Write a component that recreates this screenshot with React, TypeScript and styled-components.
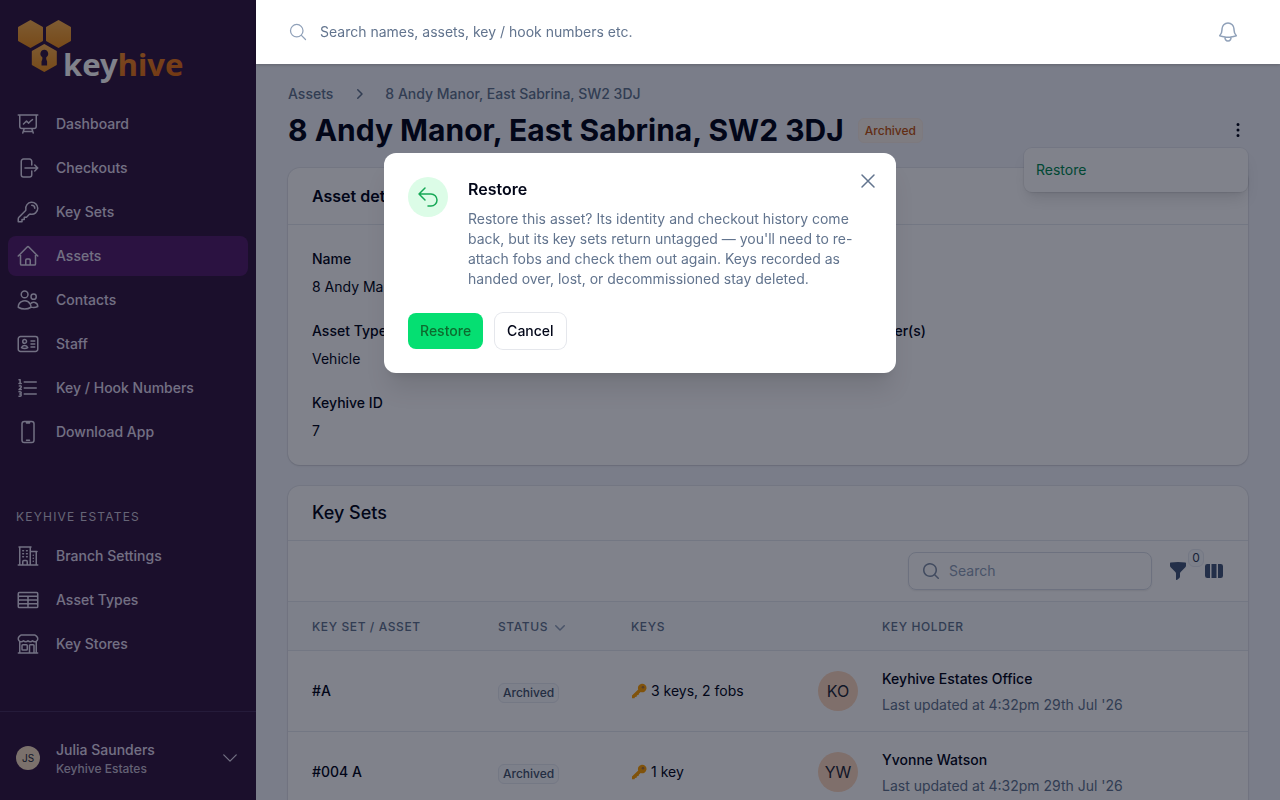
import React from "react";
import styled, { createGlobalStyle, css } from "styled-components";
import {
  HiOutlinePresentationChartLine,
  HiOutlineArrowRightOnRectangle,
  HiOutlineKey,
  HiOutlineHome,
  HiOutlineUsers,
  HiOutlineIdentification,
  HiOutlineNumberedList,
  HiOutlineDevicePhoneMobile,
  HiOutlineBuildingOffice2,
  HiOutlineTableCells,
  HiOutlineBuildingStorefront,
  HiOutlineChevronDown,
  HiOutlineMagnifyingGlass,
  HiOutlineBell,
  HiOutlineArrowUturnLeft,
  HiOutlineXMark,
  HiMiniChevronRight,
  HiMiniChevronDown,
  HiMiniEllipsisVertical,
  HiMiniFunnel,
  HiMiniViewColumns,
  HiMiniMagnifyingGlass,
} from "react-icons/hi2";

const GlobalStyle = createGlobalStyle`
  *, *::before, *::after { box-sizing: border-box; }
  html, body { margin: 0; }
  body {
    background: #f2f4fa;
    color: #020618;
    font-family: Inter, "Liberation Sans", sans-serif;
    font-size: 14px;
    line-height: 20px;
  }
  h1, h2, p, dl, dd, ul { margin: 0; padding: 0; }
  button, input { font: inherit; }
  a { color: inherit; text-decoration: none; }
`;

const Shell = styled.div`
  display: flex;
  height: 100vh;
`;

/* ---------- sidebar ---------- */

const Sidebar = styled.aside`
  display: flex;
  flex-direction: column;
  flex: 0 0 256px;
  background: #341840;
  color: #e2dbee;
`;

const Brand = styled.a`
  display: block;
  height: 104px;
  padding: 16px 16px 0;
`;

const NavGroup = styled.ul`
  display: flex;
  flex-direction: column;
  gap: 4px;
  padding: 0 8px;
  list-style: none;
`;

const NavLink = styled.a<{ $active?: boolean }>`
  display: flex;
  align-items: center;
  gap: 16px;
  height: 40px;
  padding: 0 8px;
  border-radius: 8px;
  font-weight: 500;
  background: ${(p) => (p.$active ? "#551f6a" : "transparent")};
  svg { width: 24px; height: 24px; }
`;

const NavHeading = styled.h2`
  margin-top: 55px;
  padding: 0 16px 9px;
  font-size: 12px;
  font-weight: 400;
  line-height: 20px;
  letter-spacing: 0.1em;
  text-transform: uppercase;
  color: #cbc5d6;
`;

const Account = styled.button`
  display: flex;
  align-items: center;
  gap: 16px;
  height: 89px;
  margin-top: auto;
  padding: 4px 16px 0;
  border: 0;
  border-top: 1px solid #48305c;
  background: none;
  color: inherit;
  text-align: left;
`;

const AccountText = styled.span`
  display: flex;
  flex-direction: column;
  flex: 1;
  padding-top: 2px;
`;

const AccountName = styled.span`
  font-weight: 500;
`;

const AccountOrg = styled.span`
  font-size: 12px;
  font-weight: 500;
  line-height: 18px;
  color: #c4bdd0;
`;

const Avatar = styled.span<{ $small?: boolean }>`
  display: inline-flex;
  align-items: center;
  justify-content: center;
  flex: none;
  width: ${(p) => (p.$small ? "24px" : "40px")};
  height: ${(p) => (p.$small ? "24px" : "40px")};
  border-radius: 50%;
  background: ${(p) => (p.$small ? "#f5dcc0" : "#fdd8be")};
  color: #1f2937;
  font-size: ${(p) => (p.$small ? "10px" : "16px")};
`;

/* ---------- main column ---------- */

const Column = styled.div`
  display: flex;
  flex-direction: column;
  flex: 1;
  min-width: 0;
`;

const TopBar = styled.header`
  position: relative;
  z-index: 20;
  display: flex;
  align-items: center;
  gap: 12px;
  flex: 0 0 64px;
  padding: 0 40px 0 32px;
  background: #fff;
  color: #90a1b9;
  box-shadow: 0 1px 3px rgba(0, 0, 0, 0.2);
`;

const GlobalSearch = styled.input`
  flex: 1;
  height: 40px;
  padding: 0 0 2px;
  border: 0;
  outline: 0;
  background: none;
  &::placeholder { color: #62748e; opacity: 1; }
`;

const IconButton = styled.button`
  display: inline-flex;
  padding: 0;
  border: 0;
  background: none;
  color: inherit;
`;

const Content = styled.main`
  flex: 1;
  padding: 20px 32px;
  overflow-y: auto;
  scrollbar-width: none;
`;

const Breadcrumbs = styled.nav`
  display: flex;
  align-items: center;
  gap: 16px;
  color: #62748e;
  font-weight: 500;
`;

const TitleRow = styled.div`
  display: flex;
  align-items: center;
  gap: 14px;
  margin: 8px 0 20px;
`;

const Title = styled.h1`
  font-size: 30px;
  line-height: 36px;
  font-weight: 700;
`;

const Badge = styled.span<{ $tone: "warning" | "gray" }>`
  display: inline-block;
  border-radius: 6px;
  font-size: 12px;
  font-weight: 500;
  ${(p) =>
    p.$tone === "warning"
      ? css`
          padding: 3px 6px 2px;
          line-height: 18px;
          background: #fbf3ea;
          border: 1px solid #f8ede4;
          color: #c2550f;
        `
      : css`
          margin-top: 5px;
          padding: 1px 4px;
          line-height: 16px;
          background: #f8fafc;
          border: 1px solid #e6eaf1;
          color: #45556c;
        `}
`;

const MenuAnchor = styled.div`
  position: relative;
  display: flex;
  margin-left: auto;
`;

const Menu = styled.div`
  position: absolute;
  top: 28px;
  right: 0;
  width: 224px;
  padding: 4px;
  border-radius: 8px;
  background: #fff;
  box-shadow: 0 0 0 1px rgba(2, 6, 24, 0.05), 0 10px 15px -3px rgba(0, 0, 0, 0.1),
    0 4px 6px -4px rgba(0, 0, 0, 0.1);
`;

const MenuItem = styled.button`
  width: 100%;
  padding: 8px;
  border: 0;
  border-radius: 6px;
  background: none;
  color: #008a50;
  text-align: left;
`;

const DotsButton = styled(IconButton)`
  padding: 0;
  color: #020618;
`;

const Card = styled.section`
  margin-bottom: 21px;
  border-radius: 12px;
  background: #fff;
  box-shadow: 0 0 0 1px rgba(2, 6, 24, 0.05), 0 1px 2px rgba(0, 0, 0, 0.1);
  overflow: hidden;
`;

const CardHeader = styled.header<{ $large?: boolean }>`
  padding: ${(p) => (p.$large ? "15px 24px" : "16px 24px")};
  border-bottom: 1px solid #e5e8ee;
  h2 {
    font-size: ${(p) => (p.$large ? "18px" : "16px")};
    font-weight: ${(p) => (p.$large ? 500 : 600)};
    line-height: 24px;
  }
`;

const Details = styled.dl`
  display: grid;
  grid-template-columns: 1fr 1fr;
  gap: 24px;
  padding: 24px;
  dt { margin-bottom: 8px; font-weight: 500; }
`;

const Wide = styled.div`
  grid-column: 1 / -1;
`;

const Toolbar = styled.div`
  display: flex;
  align-items: center;
  justify-content: flex-end;
  gap: 16px;
  height: 61px;
  padding: 0 24px;
  border-bottom: 1px solid #e5e8ee;
  color: #45597a;
`;

const SearchBox = styled.label`
  display: flex;
  align-items: center;
  gap: 8px;
  width: 244px;
  height: 38px;
  padding: 0 12px;
  border: 1px solid #d8dde6;
  border-radius: 8px;
  box-shadow: 0 1px 2px rgba(0, 0, 0, 0.08);
  color: #8291a8;
`;

const SearchInput = styled.input`
  flex: 1;
  min-width: 0;
  padding: 0;
  border: 0;
  outline: 0;
  background: none;
  &::placeholder { color: #90a1b9; opacity: 1; }
`;

const FilterButton = styled(IconButton)`
  position: relative;
`;

const Count = styled.span`
  position: absolute;
  top: -12px;
  right: -16px;
  width: 16px;
  height: 18px;
  border: 1px solid #e6eaf1;
  border-radius: 6px;
  background: #f8fafc;
  color: #314158;
  font-size: 12px;
  line-height: 16px;
  text-align: center;
`;

const Table = styled.table`
  width: 100%;
  table-layout: fixed;
  border-collapse: collapse;
  text-align: left;
  th {
    height: 48px;
    padding: 2px 0 0 24px;
    background: #f8fafc;
    color: #62748e;
    font-size: 12px;
    font-weight: 500;
    letter-spacing: 0.05em;
    text-transform: uppercase;
  }
  td {
    height: 81px;
    padding: 0 0 0 24px;
    border-top: 1px solid #e5e8ee;
  }
`;

const Col = styled.col<{ $w?: number }>`
  ${(p) => p.$w && `width: ${p.$w}px;`}
`;

const SortButton = styled(IconButton)`
  align-items: center;
  gap: 2px;
  letter-spacing: inherit;
  text-transform: inherit;
  svg { color: #90a1b9; }
`;

const Strong = styled.span`
  font-weight: 500;
`;

const KeysCell = styled.span`
  display: flex;
  align-items: center;
  gap: 4px;
`;

const Holder = styled.div`
  display: flex;
  flex-direction: column;
  gap: 6px;
  padding-top: 2px;
`;

const Muted = styled.span`
  color: #62748e;
`;

/* ---------- dialog ---------- */

const Overlay = styled.div`
  position: fixed;
  inset: 0;
  z-index: 10;
  background: rgba(2, 6, 24, 0.5);
`;

const DialogLayer = styled.div`
  position: fixed;
  inset: 0;
  z-index: 30;
  display: grid;
  grid-template-rows: 1fr auto 3fr;
  justify-items: center;
  padding: 16px;
`;

const Dialog = styled.section`
  position: relative;
  grid-row: 2;
  width: 100%;
  max-width: 512px;
  padding: 24px;
  border-radius: 12px;
  background: #fff;
  box-shadow: 0 20px 25px -5px rgba(0, 0, 0, 0.1), 0 8px 10px -6px rgba(0, 0, 0, 0.1);
`;

const CloseButton = styled(IconButton)`
  position: absolute;
  top: 16px;
  right: 16px;
  color: #62748e;
`;

const DialogBody = styled.div`
  display: flex;
  gap: 20px;
`;

const DialogIcon = styled.span`
  display: flex;
  align-items: center;
  justify-content: center;
  flex: none;
  width: 40px;
  height: 40px;
  border-radius: 50%;
  background: #dcfce7;
  color: #16a856;
`;

const DialogTitle = styled.h2`
  margin-bottom: 8px;
  font-size: 16px;
  line-height: 24px;
  font-weight: 600;
`;

const DialogText = styled.p`
  color: #62748e;
`;

const DialogActions = styled.div`
  display: flex;
  gap: 12px;
  margin-top: 24px;
`;

const Button = styled.button<{ $primary?: boolean }>`
  height: 36px;
  padding: 0 12px;
  border: 0;
  border-radius: 8px;
  font-weight: 500;
  background: ${(p) => (p.$primary ? "#05df72" : "#fff")};
  color: ${(p) => (p.$primary ? "#0d6b2f" : "#020618")};
  box-shadow: ${(p) => (p.$primary ? "none" : "0 0 0 1px #e5e7ec")};
`;

/* ---------- drawings ---------- */

const Hexagon = ({ x, y }: { x: number; y: number }) => (
  <path
    transform={`translate(${x} ${y})`}
    d="M0 -13 L11.5 -6.5 V6.5 L0 13 L-11.5 6.5 V-6.5 Z"
    fill="url(#honey)"
    stroke="url(#honey)"
    strokeWidth="2"
    strokeLinejoin="round"
  />
);

const Logo = () => (
  <svg width="176" height="72" viewBox="0 0 176 72" role="img" aria-label="keyhive">
    <defs>
      <linearGradient id="honey" x1="0" y1="0" x2="0" y2="1">
        <stop offset="0" stopColor="#fab04c" />
        <stop offset="1" stopColor="#ec8f1c" />
      </linearGradient>
      <linearGradient id="hive" x1="0" y1="0" x2="1" y2="1">
        <stop offset="0" stopColor="#f9a03a" />
        <stop offset="1" stopColor="#e2650a" />
      </linearGradient>
    </defs>
    <Hexagon x={14.5} y={18} />
    <Hexagon x={42.5} y={18} />
    <Hexagon x={28.300} y={42} />
    <path
      d="M28.300 33.800a4 4 0 0 1 2 7.400q-.6 1.500.8 4.200v4.200h-5.600v-4.200q1.400-2.700.8-4.200a4 4 0 0 1 2-7.400z"
      fill="#341840"
    />
    <text x="47" y="60" fontFamily='"Noto Sans", "Open Sans", sans-serif' fontSize="31" fontWeight="700" fill="#fff">
      key<tspan fill="url(#hive)">hive</tspan>
    </text>
  </svg>
);

const GoldKey = () => (
  <svg width="16" height="16" viewBox="0 0 16 16" aria-hidden="true">
    <path
      d="M1 12.600 7.200 6.500A4.300 4.300 0 1 1 9.700 9L8 10.600 7.500 12 6 12.300 5.600 13.800 4 14 3.500 15.200H1.400Q1 15.200 1 14.700z"
      fill="#ffa000"
    />
    <circle cx="12" cy="4.200" r="1.300" fill="#a8743a" />
  </svg>
);

/* ---------- data ---------- */

const mainNav = [
  { label: "Dashboard", Icon: HiOutlinePresentationChartLine },
  { label: "Checkouts", Icon: HiOutlineArrowRightOnRectangle },
  { label: "Key Sets", Icon: HiOutlineKey },
  { label: "Assets", Icon: HiOutlineHome, active: true },
  { label: "Contacts", Icon: HiOutlineUsers },
  { label: "Staff", Icon: HiOutlineIdentification },
  { label: "Key / Hook Numbers", Icon: HiOutlineNumberedList },
  { label: "Download App", Icon: HiOutlineDevicePhoneMobile },
];

const branchNav = [
  { label: "Branch Settings", Icon: HiOutlineBuildingOffice2 },
  { label: "Asset Types", Icon: HiOutlineTableCells },
  { label: "Key Stores", Icon: HiOutlineBuildingStorefront },
];

const keySets = [
  { id: "#A", keys: "3 keys, 2 fobs", initials: "KO", holder: "Keyhive Estates Office" },
  { id: "#004 A", keys: "1 key", initials: "YW", holder: "Yvonne Watson" },
];

const NavList = ({ items }: { items: { label: string; Icon: React.ElementType; active?: boolean }[] }) => (
  <NavGroup>
    {items.map(({ label, Icon, active }) => (
      <li key={label}>
        <NavLink href="#" $active={active}>
          <Icon />
          {label}
        </NavLink>
      </li>
    ))}
  </NavGroup>
);

export default function App() {
  return (
    <>
      <GlobalStyle />
      <Shell>
        <Sidebar>
          <Brand href="#"><Logo /></Brand>
          <NavList items={mainNav} />
          <NavHeading>Keyhive Estates</NavHeading>
          <NavList items={branchNav} />
          <Account>
            <Avatar $small>JS</Avatar>
            <AccountText>
              <AccountName>Julia Saunders</AccountName>
              <AccountOrg>Keyhive Estates</AccountOrg>
            </AccountText>
            <HiOutlineChevronDown size={20} />
          </Account>
        </Sidebar>

        <Column>
          <TopBar>
            <HiOutlineMagnifyingGlass size={20} />
            <GlobalSearch aria-label="Search everything" placeholder="Search names, assets, key / hook numbers etc." />
            <IconButton aria-label="Notifications"><HiOutlineBell size={24} /></IconButton>
          </TopBar>

          <Content>
            <Breadcrumbs aria-label="Breadcrumb">
              <a href="#">Assets</a>
              <HiMiniChevronRight size={20} />
              <a href="#">8 Andy Manor, East Sabrina, SW2 3DJ</a>
            </Breadcrumbs>

            <TitleRow>
              <Title>8 Andy Manor, East Sabrina, SW2 3DJ</Title>
              <Badge $tone="warning">Archived</Badge>
              <MenuAnchor>
                <DotsButton aria-label="More actions"><HiMiniEllipsisVertical size={20} /></DotsButton>
                <Menu><MenuItem>Restore</MenuItem></Menu>
              </MenuAnchor>
            </TitleRow>

            <Card>
              <CardHeader><h2>Asset details</h2></CardHeader>
              <Details>
                <Wide>
                  <dt>Name</dt>
                  <dd>8 Andy Manor, East Sabrina, SW2 3DJ</dd>
                </Wide>
                <div>
                  <dt>Asset Type</dt>
                  <dd>Vehicle</dd>
                </div>
                <div>
                  <dt>Current Key Holder(s)</dt>
                </div>
                <div>
                  <dt>Keyhive ID</dt>
                  <dd>7</dd>
                </div>
              </Details>
            </Card>

            <Card>
              <CardHeader $large><h2>Key Sets</h2></CardHeader>
              <Toolbar>
                <SearchBox>
                  <HiMiniMagnifyingGlass size={20} />
                  <SearchInput aria-label="Search key sets" placeholder="Search" />
                </SearchBox>
                <FilterButton aria-label="Filter">
                  <HiMiniFunnel size={20} />
                  <Count>0</Count>
                </FilterButton>
                <IconButton aria-label="Columns"><HiMiniViewColumns size={20} /></IconButton>
              </Toolbar>
              <Table>
                <colgroup>
                  <Col $w={186} />
                  <Col $w={133} />
                  <Col $w={187} />
                  <Col $w={64} />
                  <Col />
                </colgroup>
                <thead>
                  <tr>
                    <th>Key Set / Asset</th>
                    <th><SortButton>Status <HiMiniChevronDown size={20} /></SortButton></th>
                    <th>Keys</th>
                    <th aria-label="Initials" />
                    <th>Key Holder</th>
                  </tr>
                </thead>
                <tbody>
                  {keySets.map((row) => (
                    <tr key={row.id}>
                      <td><Strong>{row.id}</Strong></td>
                      <td><Badge $tone="gray">Archived</Badge></td>
                      <td><KeysCell><GoldKey />{row.keys}</KeysCell></td>
                      <td><Avatar>{row.initials}</Avatar></td>
                      <td>
                        <Holder>
                          <Strong>{row.holder}</Strong>
                          <Muted>Last updated at 4:32pm 29th Jul '26</Muted>
                        </Holder>
                      </td>
                    </tr>
                  ))}
                </tbody>
              </Table>
            </Card>
          </Content>
        </Column>
      </Shell>

      <Overlay />
      <DialogLayer>
        <Dialog role="dialog" aria-modal="true" aria-labelledby="restore-title">
          <CloseButton aria-label="Close"><HiOutlineXMark size={24} /></CloseButton>
          <DialogBody>
            <DialogIcon><HiOutlineArrowUturnLeft size={24} /></DialogIcon>
            <div>
              <DialogTitle id="restore-title">Restore</DialogTitle>
              <DialogText>
                Restore this asset? Its identity and checkout history come back, but its key sets return
                untagged — you'll need to re-attach fobs and check them out again. Keys recorded as handed
                over, lost, or decommissioned stay deleted.
              </DialogText>
            </div>
          </DialogBody>
          <DialogActions>
            <Button $primary>Restore</Button>
            <Button>Cancel</Button>
          </DialogActions>
        </Dialog>
      </DialogLayer>
    </>
  );
}
